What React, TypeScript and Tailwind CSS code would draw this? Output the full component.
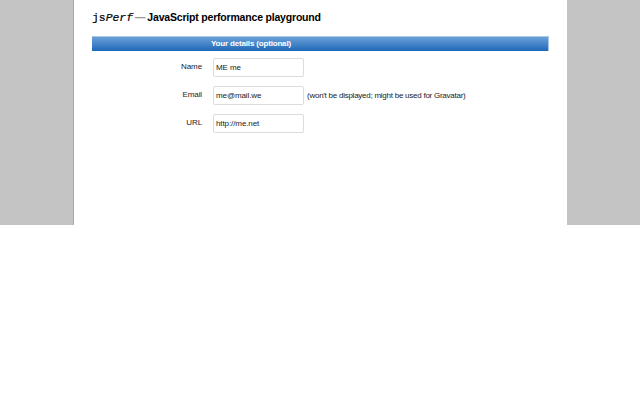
const FIELDS = [
  { label: "Name", value: "ME me", top: "mt-[7px]" },
  { label: "Email", value: "me@mail.we", hint: "(won't be displayed; might be used for Gravatar)", top: "mt-[9px]" },
  { label: "URL", value: "http://me.net", top: "mt-[9px]" },
];

export default function App() {
  return (
    <div className="w-[640px] h-[400px] bg-white font-['Liberation_Sans',Arial,sans-serif] overflow-hidden">
      <div className="h-[225px] bg-[#c4c4c4] flex justify-center">
        <div className="w-[494px] bg-white border-l border-[#a8a8a8] pl-[18px] pr-[18px]">
          <h1 className="h-[36px] pt-[10px] text-[10.5px] tracking-[-0.19px] leading-[15px] font-bold text-black flex items-baseline whitespace-nowrap">
            <span className="font-['Liberation_Mono',monospace] text-[11.4px] tracking-normal font-normal [-webkit-text-stroke:0.2px_black]">js<i>Perf</i></span>
            <span className="text-[#9a9a9a] font-bold ml-[2px] mr-[2px]">—</span>
            JavaScript performance playground
          </h1>
          <div className="h-[15px] bg-gradient-to-b from-[#6a9fd8] to-[#1a69b8] border-t border-r border-[#a9c8ea] text-white text-[8px] tracking-[-0.17px] leading-[13px] font-bold pl-[119px]">
            Your details (optional)
          </div>
          {FIELDS.map((f) => (
            <div key={f.label} className={`flex items-center ${f.top}`}>
              <label className="w-[110px] text-right text-[8px] tracking-[-0.1px] text-[#1a1a2a] -translate-y-[1px]">{f.label}</label>
              <input
                readOnly
                value={f.value}
                className="ml-[11px] w-[91px] h-[19px] px-[2px] bg-white border border-[#dcdcdc] rounded-[2px] text-[8px] tracking-[-0.1px] text-[#222]"
              />
              {f.hint && <span className="ml-[3px] text-[8px] tracking-[-0.25px] text-[#222] whitespace-nowrap">{f.hint}</span>}
            </div>
          ))}
        </div>
      </div>
    </div>
  );
}
